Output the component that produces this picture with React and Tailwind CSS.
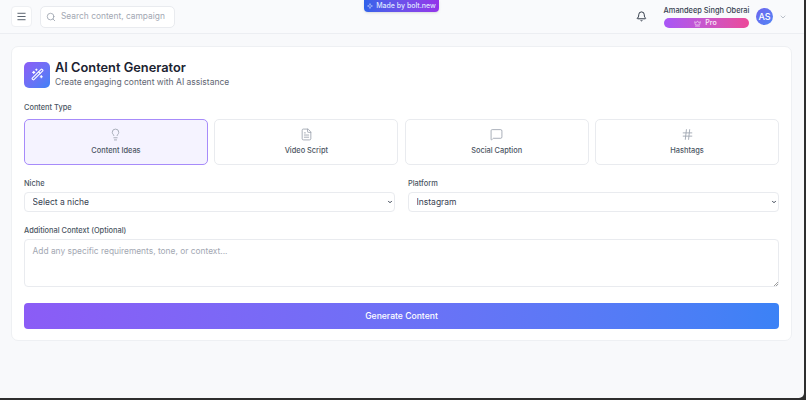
import React from "react";
import { Menu, Search, Bell, ChevronDown, Crown, Wand2, Lightbulb, FileText, MessageSquare, Hash, Sparkle } from "lucide-react";

const types = [
  { label: "Content Ideas", Icon: Lightbulb, active: true },
  { label: "Video Script", Icon: FileText },
  { label: "Social Caption", Icon: MessageSquare },
  { label: "Hashtags", Icon: Hash },
];

function Field({ label, value }) {
  return (
    <div>
      <p className="text-[7.4px] font-medium leading-[11px] text-[#4b5563]">{label}</p>
      <div className="relative mt-[3px]">
        <select defaultValue={value} className="block h-[20px] w-full appearance-none rounded-[4px] border border-[#e9ebef] bg-white pl-[7.5px] text-[8.5px] text-[#374151] outline-none">
          <option>{value}</option>
        </select>
        <ChevronDown className="pointer-events-none absolute right-[2px] top-[7px] h-[6px] w-[6px] text-[#374151]" strokeWidth={4} />
      </div>
    </div>
  );
}

export default function App() {
  return (
    <div className="h-[400px] w-[806px] overflow-hidden bg-[#2e2e2e] font-['Inter',sans-serif]">
      <div className="relative flex h-[398px] w-[804px] flex-col overflow-hidden rounded-br-[5px] bg-[#f8f9fb]">
        <div className="absolute left-[364px] top-0 z-10 flex h-[12px] w-[75px] items-center justify-center gap-[3px] rounded-b-[4px] bg-gradient-to-r from-[#2f62ea] to-[#9333ea] text-[7px] font-medium text-[#dfe6ff] shadow-sm">
          <Sparkle className="h-[6px] w-[6px] shrink-0" />
          <span className="whitespace-nowrap">Made by bolt.new</span>
        </div>
        <header className="flex h-[34px] shrink-0 items-center justify-between border-b border-[#eceef2] bg-[#f9fafc] pl-[11px] pr-[17px]">
          <div className="flex items-center gap-[8px]">
            <button className="flex h-[21px] w-[21px] items-center justify-center rounded-[4px] border border-[#eef0f3] bg-white text-[#4b5563]">
              <Menu className="h-[11px] w-[11px]" />
            </button>
            <div className="flex h-[22px] w-[135px] items-center gap-[5px] overflow-hidden rounded-[5px] border border-[#e9ebef] bg-white pl-[5px]">
              <Search className="h-[10px] w-[10px] shrink-0 text-[#9ca3af]" />
              <span className="whitespace-nowrap text-[8.4px] text-[#a3a8b3]">Search content, campaign</span>
            </div>
          </div>
          <div className="flex items-center">
            <Bell className="mr-[17px] h-[11px] w-[11px] text-[#1f2937]" />
            <div className="mr-[7px] flex w-[85px] flex-col items-center">
              <span className="whitespace-nowrap text-[7.4px] font-medium leading-[11px] text-[#374151]">Amandeep Singh Oberai</span>
              <div className="mt-[2px] flex h-[10px] w-full items-center justify-center gap-[4px] rounded-full bg-gradient-to-r from-[#a855f7] to-[#ec4899] pr-[2px] text-[7px] font-medium text-[#fbeefa]">
                <Crown className="h-[7px] w-[7px]" />
                <span>Pro</span>
              </div>
            </div>
            <div className="flex h-[17px] w-[17px] items-center justify-center rounded-full bg-gradient-to-br from-[#6d63ee] to-[#4f86f5] text-[9px] font-medium text-white">AS</div>
            <ChevronDown className="ml-[6px] h-[8px] w-[8px] text-[#9ca3af]" />
          </div>
        </header>
        <main className="pl-[11px] pr-[12px] pt-[12px]">
          <section className="h-[295px] rounded-[7px] border border-[#eef0f3] bg-white px-[12px] pt-[13px]">
            <div className="flex items-center gap-[5px]">
              <div className="flex h-[26px] w-[26px] items-center justify-center rounded-[5px] bg-gradient-to-br from-[#8b5cf6] to-[#3b82f6] text-white">
                <Wand2 className="h-[13px] w-[13px]" />
              </div>
              <div>
                <h1 className="text-[12.8px] font-semibold leading-[16px] text-[#1b2230]">AI Content Generator</h1>
                <p className="text-[8.5px] leading-[13px] text-[#5f6673]">Create engaging content with AI assistance</p>
              </div>
            </div>
            <p className="mt-[13px] text-[7.4px] font-medium leading-[11px] text-[#4b5563]">Content Type</p>
            <div className="mt-[6px] grid grid-cols-4 gap-[6.4px]">
              {types.map(({ label, Icon, active }) => (
                <button
                  key={label}
                  className={
                    active
                      ? "flex h-[46px] flex-col items-center rounded-[5px] border-[1.5px] border-[#a78bfa] bg-[#f5f3ff] pt-[8px]"
                      : "flex h-[46px] flex-col items-center rounded-[5px] border border-[#e9ebef] bg-white pt-[8px]"
                  }
                >
                  <Icon className="h-[13px] w-[13px] text-[#9ca3af]" strokeWidth={1.6} />
                  <span className="mt-[4px] text-[7.4px] font-medium leading-[11px] text-[#4b5563]">{label}</span>
                </button>
              ))}
            </div>
            <div className="mt-[13px] grid grid-cols-2 gap-[13px]">
              <Field label="Niche" value="Select a niche" />
              <Field label="Platform" value="Instagram" />
            </div>
            <p className="mt-[13px] text-[7.4px] font-medium leading-[11px] text-[#4b5563]">Additional Context (Optional)</p>
            <div className="relative mt-[3px]">
              <textarea
                placeholder="Add any specific requirements, tone, or context..."
                className="block h-[48px] w-full resize-none rounded-[4px] border border-[#e9ebef] bg-white px-[7.5px] py-[5px] text-[8.4px] leading-[13px] text-[#374151] outline-none placeholder:text-[#a3a8b3]"
              />
              <svg className="pointer-events-none absolute bottom-[1px] right-[1px] h-[4px] w-[4px] text-[#777]" viewBox="0 0 4 4" fill="none" stroke="currentColor" strokeWidth="0.7">
                <path d="M0 4 4 0M2 4 4 2" />
              </svg>
            </div>
            <button className="mt-[16px] flex h-[26px] w-full items-center justify-center rounded-[4px] bg-gradient-to-r from-[#8b5cf6] to-[#3b82f6] text-[8.6px] font-medium text-white">
              Generate Content
            </button>
          </section>
        </main>
      </div>
    </div>
  );
}
